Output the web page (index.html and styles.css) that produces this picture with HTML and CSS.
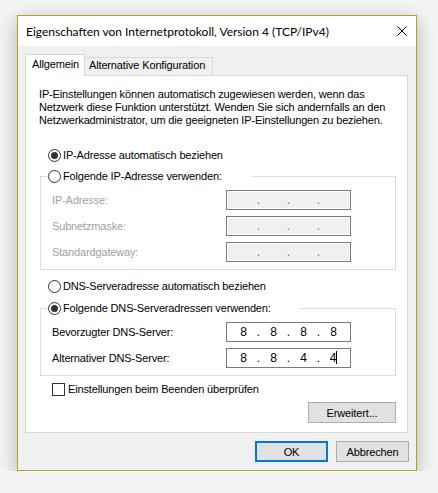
FILE: index.html
```html
<!DOCTYPE html>
<html lang="de">
<head>
<meta charset="utf-8">
<title>Eigenschaften von Internetprotokoll, Version 4 (TCP/IPv4)</title>
<link rel="stylesheet" href="styles.css">
</head>
<body>
<div class="window">
  <div class="titlebar">
    <span class="title">Eigenschaften von Internetprotokoll, Version 4 (TCP/IPv4)</span>
    <svg class="close" viewBox="0 0 10 10" aria-label="Schließen"><path d="M0.5 0.5L9.5 9.5M9.5 0.5L0.5 9.5" stroke="#000" stroke-width="1" fill="none"/></svg>
  </div>
  <div class="client">
    <div class="tabs">
      <div class="tab tab-active">Allgemein</div>
      <div class="tab tab-idle">Alternative Konfiguration</div>
    </div>
    <div class="panel">
      <p class="intro">IP-Einstellungen können automatisch zugewiesen werden, wenn das<br>Netzwerk diese Funktion unterstützt. Wenden Sie sich andernfalls an den<br>Netzwerkadministrator, um die geeigneten IP-Einstellungen zu beziehen.</p>

      <div class="choice choice-ip"><span class="radio radio-on"></span>IP-Adresse automatisch beziehen</div>
      <fieldset class="group group-ip">
        <legend class="group-title"><div class="choice"><span class="radio"></span>Folgende IP-Adresse verwenden:</div></legend>
        <div class="row row-first row-disabled"><span class="row-label">IP-Adresse:</span>
          <div class="ipbox"><span class="octet"></span><span class="dot">.</span><span class="octet"></span><span class="dot">.</span><span class="octet"></span><span class="dot">.</span><span class="octet"></span></div></div>
        <div class="row row-disabled"><span class="row-label">Subnetzmaske:</span>
          <div class="ipbox"><span class="octet"></span><span class="dot">.</span><span class="octet"></span><span class="dot">.</span><span class="octet"></span><span class="dot">.</span><span class="octet"></span></div></div>
        <div class="row row-disabled"><span class="row-label">Standardgateway:</span>
          <div class="ipbox"><span class="octet"></span><span class="dot">.</span><span class="octet"></span><span class="dot">.</span><span class="octet"></span><span class="dot">.</span><span class="octet"></span></div></div>
      </fieldset>

      <div class="choice choice-dns"><span class="radio"></span>DNS-Serveradresse automatisch beziehen</div>
      <fieldset class="group group-dns">
        <legend class="group-title group-title-dns"><div class="choice"><span class="radio radio-on"></span>Folgende DNS-Serveradressen verwenden:</div></legend>
        <div class="row row-first"><span class="row-label">Bevorzugter DNS-Server:</span>
          <div class="ipbox"><span class="octet">8</span><span class="dot">.</span><span class="octet">8</span><span class="dot">.</span><span class="octet">8</span><span class="dot">.</span><span class="octet">8</span></div></div>
        <div class="row"><span class="row-label">Alternativer DNS-Server:</span>
          <div class="ipbox"><span class="octet">8</span><span class="dot">.</span><span class="octet">8</span><span class="dot">.</span><span class="octet">4</span><span class="dot">.</span><span class="octet">4<span class="caret"></span></span></div></div>
      </fieldset>

      <div class="check"><span class="checkbox"></span>Einstellungen beim Beenden überprüfen</div>
      <div class="panel-actions"><button class="btn btn-advanced">Erweitert...</button></div>
    </div>
    <div class="actions">
      <button class="btn btn-default">OK</button>
      <button class="btn">Abbrechen</button>
    </div>
  </div>
</div>
</body>
</html>
```

FILE: styles.css
```css
* { box-sizing: border-box; }

html { background: #f4f4f4; }

body {
  margin: 0;
  font-family: "Liberation Sans", Arial, sans-serif;
  font-size: 11px;
  letter-spacing: -0.15px;
  color: #000;
}

/* dialog frame */
.window {
  width: 400px;
  margin: 15px 0 0 17px;
  border: 1px solid #b99f1e;
  background: #f0f0f0;
  box-shadow: 0 5px 18px rgba(0, 0, 0, 0.28);
}

.titlebar {
  height: 30px;
  background: #fff;
  display: flex;
  align-items: center;
  padding-left: 8px;
}

.title {
  flex: 1;
  font-family: Lato, "Liberation Sans", sans-serif;
  font-size: 12px;
  letter-spacing: 0;
}

.close {
  width: 10px;
  height: 10px;
  margin-right: 9px;
}

.client {
  padding: 8px 7px;
}

/* tab strip */
.tabs {
  display: flex;
  align-items: flex-end;
  height: 21px;
}

.tab {
  border: 1px solid #d9d9d9;
  border-bottom: 0;
  line-height: 13px;
  white-space: nowrap;
}

.tab-active {
  position: relative;
  z-index: 1;
  width: 60px;
  height: 22px;
  margin-bottom: -1px;
  padding: 3px 0 0 6px;
  background: #fff;
}

.tab-idle {
  width: 128px;
  height: 18px;
  border-left: 0;
  padding: 1px 0 0 4px;
}

.panel {
  width: 383px;
  height: 358px;
  background: #fff;
  border: 1px solid #d9d9d9;
}

.intro {
  margin: 12px 0 0 13px;
  line-height: 13px;
}

/* radio and check rows */
.choice,
.check {
  display: flex;
  align-items: center;
  height: 13px;
  line-height: 13px;
  white-space: nowrap;
}

.choice-ip { margin: 22px 0 0 22px; }
.choice-dns { margin: 10px 0 0 22px; }

.radio {
  width: 13px;
  height: 13px;
  margin-right: 2px;
  border: 1px solid #333;
  border-radius: 50%;
  background: #fff;
  display: flex;
  align-items: center;
  justify-content: center;
  flex: none;
}

.radio-on::after {
  content: "";
  width: 7px;
  height: 7px;
  border-radius: 50%;
  background: #333;
}

.check { margin: 7px 0 0 26px; }

.checkbox {
  width: 13px;
  height: 13px;
  margin-right: 3px;
  border: 1px solid #333;
  background: #fff;
  flex: none;
}

/* group boxes */
.group {
  margin: 8px 0 0 14px;
  width: 356px;
  min-width: 0;
  padding: 0 0 7px;
  border: 1px solid #dcdcdc;
}

.group-dns { margin-top: 9px; }

.group-title {
  padding: 0;
  margin-left: 7px;
  width: 204px;
}

.group-title-dns { width: 252px; }

.row {
  display: flex;
  align-items: center;
  height: 20px;
  margin-top: 6px;
  padding-left: 11px;
}

.row-first { margin-top: 7px; }

.row-label {
  width: 174px;
  flex: none;
}

.row-disabled .row-label { color: #a0a0a0; }

.ipbox {
  width: 125px;
  height: 20px;
  display: flex;
  align-items: center;
  padding-left: 4px;
  border: 1px solid #7a7a7a;
  background: #fff;
  font-size: 12px;
  letter-spacing: 0;
}

.row-disabled .ipbox {
  background: #f0f0f0;
  box-shadow: inset 0 0 0 1px #fff;
  color: #6d6d6d;
}

.octet {
  width: 25px;
  text-align: center;
}

.dot {
  width: 5px;
  text-align: center;
}

.caret {
  display: inline-block;
  width: 1px;
  height: 13px;
  background: #000;
  vertical-align: -2px;
}

/* buttons */
.btn {
  font: inherit;
  letter-spacing: inherit;
  color: #000;
  height: 21px;
  width: 73px;
  padding: 0;
  background: #e1e1e1;
  border: 1px solid #adadad;
}

.btn-default { border: 2px solid #0078d7; }

.btn-advanced { width: 88px; }

.panel-actions {
  display: flex;
  justify-content: flex-end;
  margin-top: 6px;
  padding-right: 11px;
}

.actions {
  display: flex;
  justify-content: flex-end;
  gap: 8px;
  margin-top: 8px;
}
```
